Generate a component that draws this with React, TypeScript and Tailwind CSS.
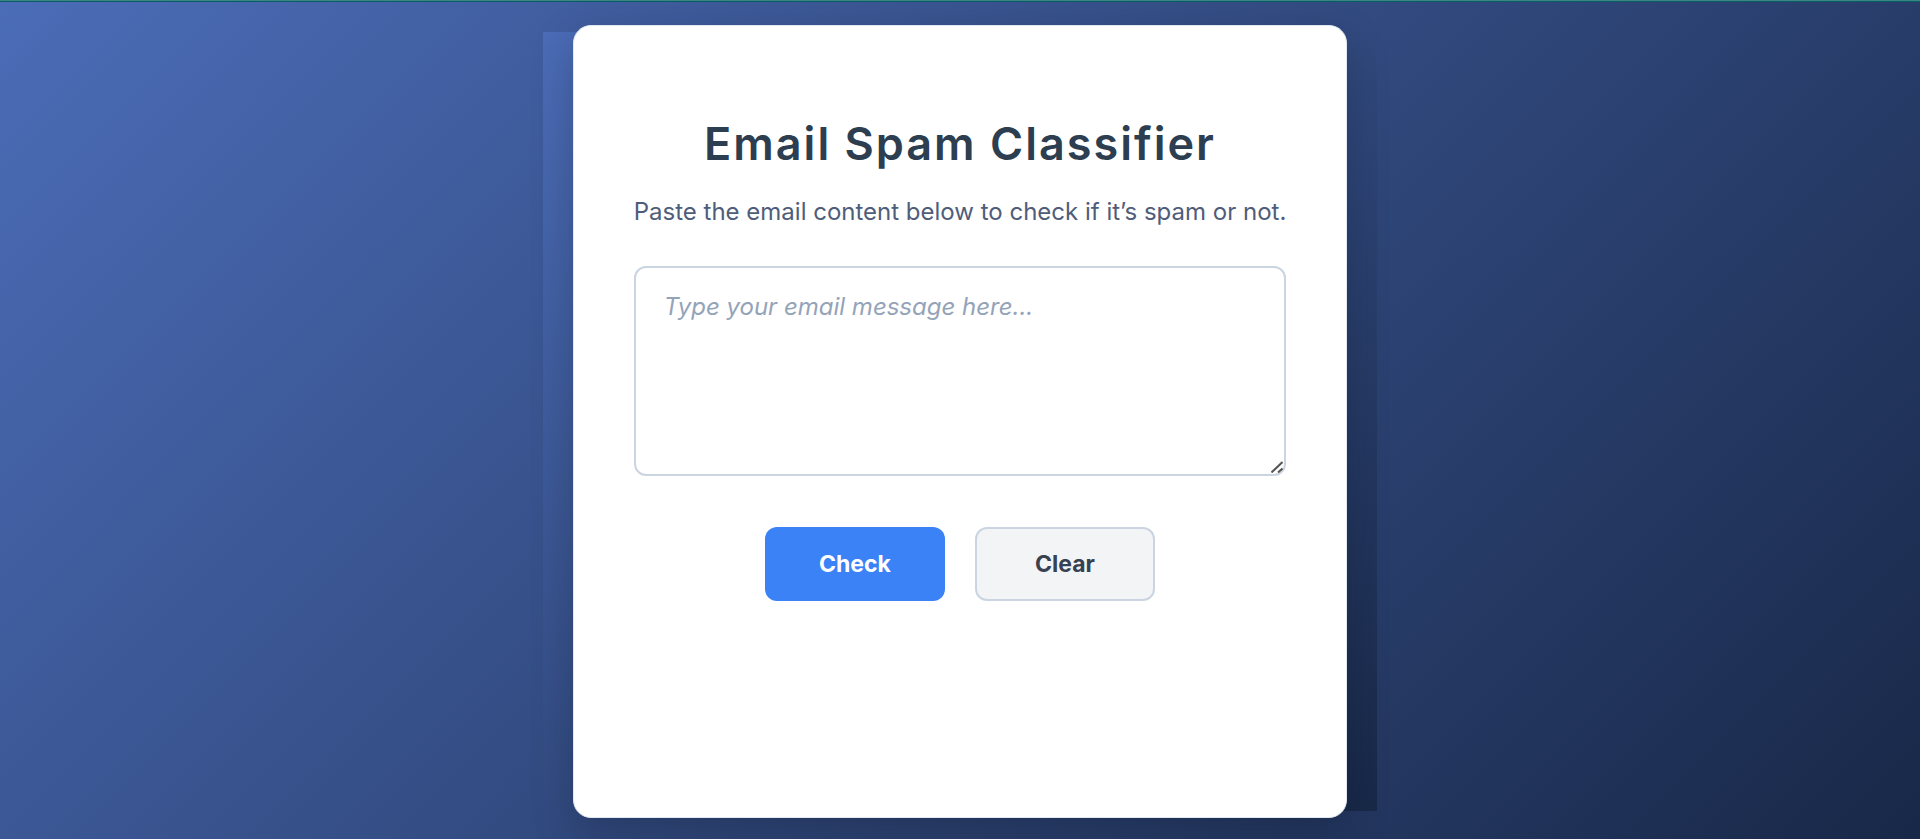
import { useState } from "react";

export default function App() {
  const [message, setMessage] = useState("");

  return (
    <div className="flex min-h-screen flex-col bg-linear-[135deg,#4b6cb7,#182848] font-['Inter','Liberation_Sans',sans-serif]">
      <div className="h-0.5 border-t border-[#3b8583] bg-[#0a5c66]" />
      <div className="flex flex-1 items-center justify-center pt-0.5">
        <div className="bg-linear-[135deg,#4b6cb7,#182848] px-[30px]">
          <main className="-my-[7px] flex min-h-[793px] flex-col items-center rounded-[18px] border border-[#e2e8f0] bg-white px-[60px] pt-[91px] pb-[60px] text-center shadow-[0_15px_45px_rgba(0,0,0,0.2)]">
            <h1 className="text-[45px] leading-[54px] font-semibold tracking-[2px] text-[#2c3e50]">
              Email Spam Classifier
            </h1>
            <label htmlFor="message" className="mt-[26px] text-2xl leading-[30px] text-[#4f5d7a]">
              Paste the email content below to check if it’s spam or not.
            </label>
            <form
              className="mt-[39px] w-full"
              onSubmit={(event) => event.preventDefault()}
            >
              <div className="relative">
                <textarea
                  id="message"
                  value={message}
                  onChange={(event) => setMessage(event.target.value)}
                  placeholder="Type your email message here..."
                  className="block h-[210px] w-full resize-y rounded-xl border-2 border-[#cbd5e1] bg-white px-7 py-6 text-2xl leading-[30px] text-[#2c3e50] outline-none placeholder:text-[#94a3b8] placeholder:italic [&::-webkit-resizer]:hidden"
                />
                <svg
                  className="pointer-events-none absolute right-[3px] bottom-[3px] size-3"
                  viewBox="0 0 12 12"
                  fill="none"
                  stroke="#555"
                  strokeWidth="2"
                  aria-hidden="true"
                >
                  <path d="M0.5 11.5 11.5 1M7 11.5 11.5 7.5" />
                </svg>
              </div>
              <div className="mt-[51px] flex justify-center gap-[30px]">
                <button
                  type="submit"
                  className="h-[74px] w-[180px] rounded-xl bg-[#3b82f6] text-[23px] font-bold text-white"
                >
                  Check
                </button>
                <button
                  type="button"
                  onClick={() => setMessage("")}
                  className="h-[74px] w-[180px] rounded-xl border-2 border-[#cbd5e1] bg-[#f3f4f6] text-[23px] font-bold text-[#374151]"
                >
                  Clear
                </button>
              </div>
            </form>
          </main>
        </div>
      </div>
    </div>
  );
}
